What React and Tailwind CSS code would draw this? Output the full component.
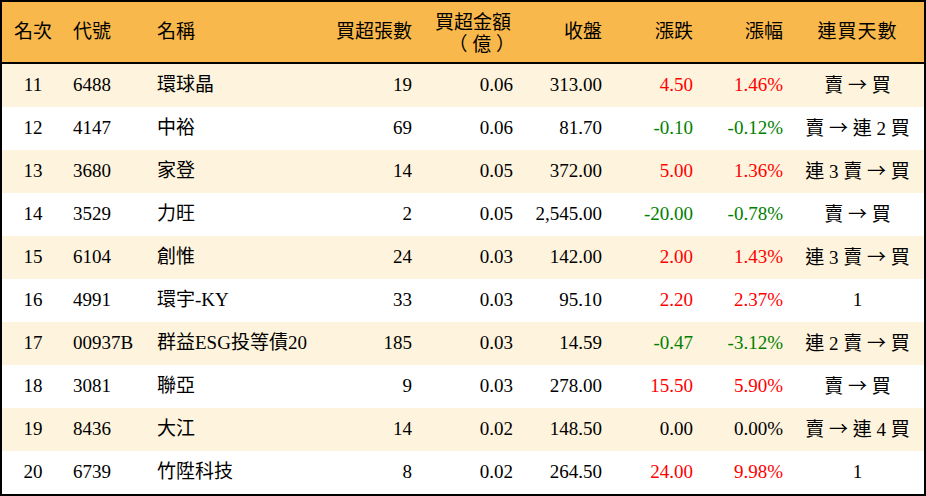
import React from "react";

const rows = [
  ["11", "6488", "環球晶", "19", "0.06", "313.00", "4.50", "1.46%", "賣 → 買"],
  ["12", "4147", "中裕", "69", "0.06", "81.70", "-0.10", "-0.12%", "賣 → 連 2 買"],
  ["13", "3680", "家登", "14", "0.05", "372.00", "5.00", "1.36%", "連 3 賣 → 買"],
  ["14", "3529", "力旺", "2", "0.05", "2,545.00", "-20.00", "-0.78%", "賣 → 買"],
  ["15", "6104", "創惟", "24", "0.03", "142.00", "2.00", "1.43%", "連 3 賣 → 買"],
  ["16", "4991", "環宇-KY", "33", "0.03", "95.10", "2.20", "2.37%", "1"],
  ["17", "00937B", "群益ESG投等債20", "185", "0.03", "14.59", "-0.47", "-3.12%", "連 2 賣 → 買"],
  ["18", "3081", "聯亞", "9", "0.03", "278.00", "15.50", "5.90%", "賣 → 買"],
  ["19", "8436", "大江", "14", "0.02", "148.50", "0.00", "0.00%", "賣 → 連 4 買"],
  ["20", "6739", "竹陞科技", "8", "0.02", "264.50", "24.00", "9.98%", "1"],
];

const cols = "grid grid-cols-[62px_86px_180px_90px_101px_89px_91px_90px_133px]";

function tone(v) {
  if (v.startsWith("-")) return "text-[#008000]";
  if (parseFloat(v) === 0) return "text-black";
  return "text-[#ff0000]";
}

// arrow drawn with the CJK font so it gets the wide glyph
function Streak({ text }) {
  const parts = text.split("→");
  if (parts.length === 1) return text;
  return (
    <>
      {parts[0]}
      <span style={{ fontFamily: '"Noto Sans CJK TC", sans-serif' }}>→</span>
      {parts[1]}
    </>
  );
}

export default function App() {
  return (
    <div
      className="w-[926px] h-[496px] border-2 border-black bg-white text-black text-[19px] overflow-hidden"
      style={{ fontFamily: '"Liberation Serif", "Noto Sans CJK TC", serif' }}
    >
      <div className={`${cols} h-[62px] bg-[#f9b84b] border-b-2 border-black items-center`}>
        <div className="text-center">名次</div>
        <div className="pl-[9px]">代號</div>
        <div className="pl-[7px]">名稱</div>
        <div className="text-right pr-[8px]">買超張數</div>
        <div className="text-right pr-[10px] leading-[22px] pt-[3px]">
          <div>買超金額</div>
          <div className="mr-[-4px] whitespace-pre">（ 億 ）</div>
        </div>
        <div className="text-right pr-[8px]">收盤</div>
        <div className="text-right pr-[8px]">漲跌</div>
        <div className="text-right pr-[8px]">漲幅</div>
        <div className="text-center tracking-[1px]">連買天數</div>
      </div>
      {rows.map((r, i) => (
        <div
          key={r[0]}
          className={`${cols} h-[43px] items-center ${i % 2 === 0 ? "bg-[#fef3dd]" : "bg-white"}`}
        >
          <div className="text-center">{r[0]}</div>
          <div className="pl-[9px]">{r[1]}</div>
          <div className="pl-[7px] whitespace-nowrap">{r[2]}</div>
          <div className="text-right pr-[8px]">{r[3]}</div>
          <div className="text-right pr-[8px]">{r[4]}</div>
          <div className="text-right pr-[8px]">{r[5]}</div>
          <div className={`text-right pr-[8px] ${tone(r[6])}`}>{r[6]}</div>
          <div className={`text-right pr-[8px] ${tone(r[7])}`}>{r[7]}</div>
          <div className="text-center whitespace-nowrap">
            <Streak text={r[8]} />
          </div>
        </div>
      ))}
    </div>
  );
}
